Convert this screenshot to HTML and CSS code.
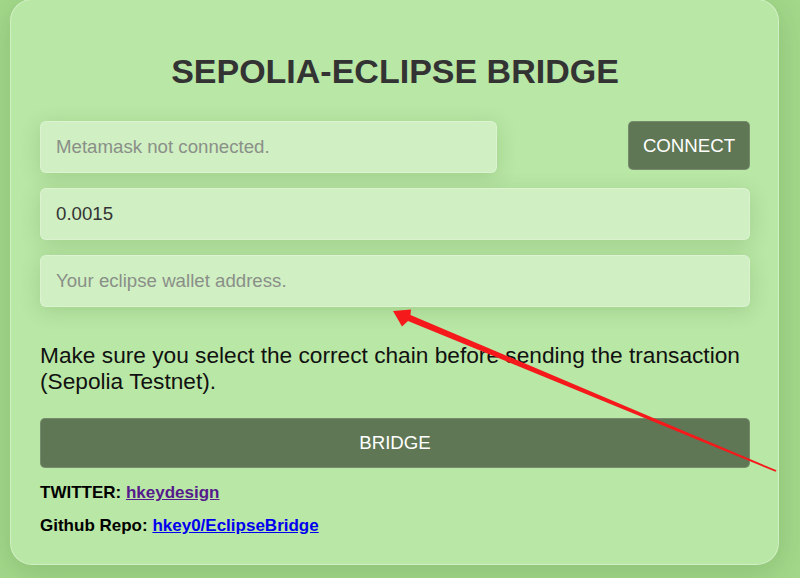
FILE: index.html
```html
<!DOCTYPE html>
<html>
<head>
<meta charset="utf-8">
<title>Sepolia-Eclipse Bridge</title>
<link rel="stylesheet" href="styles.css">
</head>
<body>
<div class="card">
  <h1 class="title">SEPOLIA-ECLIPSE BRIDGE</h1>
  <div class="row">
    <input class="field field-short" type="text" placeholder="Metamask not connected." readonly>
    <button class="btn btn-connect">CONNECT</button>
  </div>
  <input class="field field-gap" type="text" value="0.0015">
  <input class="field field-gap" type="text" placeholder="Your eclipse wallet address.">
  <p class="note">Make sure you select the correct chain before sending the transaction (Sepolia Testnet).</p>
  <button class="btn btn-bridge">BRIDGE</button>
  <p class="link-line link-first"><b>TWITTER:</b> <a class="link link-visited" href="#">hkeydesign</a></p>
  <p class="link-line"><b>Github Repo:</b> <a class="link link-new" href="#">hkey0/EclipseBridge</a></p>
</div>
<svg class="arrow" width="800" height="578" viewBox="0 0 800 578">
  <polygon fill="#f5191b" points="393,311 411,309.5 410.5,315 776.5,470.3 775.5,471.7 408,321 402,326.5"/>
</svg>
</body>
</html>
```

FILE: styles.css
```css
html, body {
  margin: 0;
  padding: 0;
}

body {
  width: 800px;
  height: 578px;
  overflow: hidden;
  background: #a3d88b;
  font-family: "Liberation Sans", Arial, sans-serif;
  position: relative;
}

.card {
  box-sizing: border-box;
  margin: -1px 0 0 10px;
  width: 769px;
  height: 566px;
  padding: 52px 28px 0 29px;
  background: #b9e7a5;
  border: 1px solid rgba(255, 255, 255, 0.35);
  border-radius: 22px;
  box-shadow: 0 8px 30px rgba(40, 90, 20, 0.18);
  display: flex;
  flex-direction: column;
}

.title {
  margin: 0;
  font-size: 34px;
  font-weight: bold;
  line-height: 39px;
  color: #333333;
  text-align: center;
}

.row {
  margin-top: 30px;
  display: flex;
  align-items: flex-start;
}

.field {
  box-sizing: border-box;
  height: 52px;
  width: 100%;
  padding: 0 15px;
  border: 1px solid rgba(255, 255, 255, 0.25);
  border-radius: 6px;
  background: #d0efc3;
  box-shadow: 0 4px 20px rgba(40, 90, 20, 0.17);
  font-family: "Liberation Sans", Arial, sans-serif;
  font-size: 18.67px;
  color: #333333;
  outline: none;
}

.field::placeholder {
  color: #8a8f88;
}

.field-short {
  width: 457px;
}

.field-gap {
  margin-top: 15px;
}

.btn {
  box-sizing: border-box;
  border: 1px solid rgba(255, 255, 255, 0.15);
  border-radius: 5px;
  background: #5f7755;
  color: #ffffff;
  font-family: "Liberation Sans", Arial, sans-serif;
  font-size: 18.67px;
  cursor: pointer;
}

.btn-connect {
  margin-left: auto;
  width: 122px;
  height: 49px;
  padding: 0;
}

.btn-bridge {
  margin-top: 23px;
  height: 50px;
  width: 100%;
}

.note {
  margin: 36px 0 0 0;
  font-size: 22.7px;
  line-height: 25.8px;
  color: #111111;
}

.link-line {
  margin: 14px 0 0 0;
  font-size: 17px;
  line-height: 19.3px;
  font-weight: bold;
  color: #000000;
}

.link-first {
  margin-top: 15px;
}

.link {
  text-decoration: underline;
}

.link-visited {
  color: #551a8b;
}

.link-new {
  color: #0000ee;
}

.arrow {
  position: absolute;
  left: 0;
  top: 0;
  pointer-events: none;
}
```
